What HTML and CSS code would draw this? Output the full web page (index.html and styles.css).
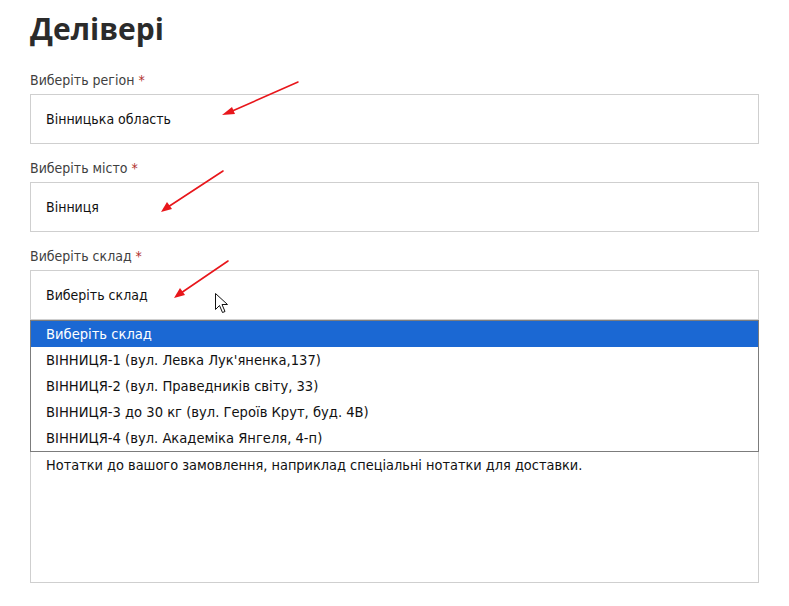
FILE: index.html
```html
<!DOCTYPE html>
<html lang="uk">
<head>
<meta charset="utf-8">
<title>Делівері</title>
<link rel="stylesheet" href="styles.css">
</head>
<body>
<div class="page">
  <h1 class="title">Делівері</h1>

  <div class="field">
    <label class="label">Виберіть регіон <span class="req">*</span></label>
    <div class="select">Вінницька область</div>
  </div>

  <div class="field">
    <label class="label">Виберіть місто <span class="req">*</span></label>
    <div class="select">Вінниця</div>
  </div>

  <div class="field field-open">
    <label class="label">Виберіть склад <span class="req">*</span></label>
    <div class="select">Виберіть склад</div>
    <ul class="dropdown">
      <li class="option selected">Виберіть склад</li>
      <li class="option">ВІННИЦЯ-1 (вул. Левка Лук'яненка,137)</li>
      <li class="option">ВІННИЦЯ-2 (вул. Праведників світу, 33)</li>
      <li class="option">ВІННИЦЯ-3 до 30 кг (вул. Героїв Крут, буд. 4В)</li>
      <li class="option">ВІННИЦЯ-4 (вул. Академіка Янгеля, 4-п)</li>
    </ul>
  </div>

  <div class="notes">
    <h3 class="notes-title">Додаткова інформація</h3>
    <label class="label">Примітки до замовлення (необов'язково)</label>
    <div class="textarea">Нотатки до вашого замовлення, наприклад спеціальні нотатки для доставки.</div>
  </div>

  <svg class="annotations" width="789" height="606" viewBox="0 0 789 606" xmlns="http://www.w3.org/2000/svg">
    <g stroke="#e8161b" stroke-width="1.6" fill="none" stroke-linecap="round">
      <line x1="298" y1="82" x2="230" y2="112"/>
      <line x1="223" y1="171" x2="168" y2="207"/>
      <line x1="228" y1="261" x2="181" y2="293"/>
    </g>
    <g fill="#e8161b">
      <polygon points="222,115 232,107 235,114"/>
      <polygon points="161,212 167,202 172,209"/>
      <polygon points="174,298 180,288 185,295"/>
    </g>
    <path d="M215.5 293.5 L215.5 309.5 L219.5 305.5 L222.5 312.5 L225 311.5 L222 304.5 L227.5 304.5 Z" fill="#fff" stroke="#111" stroke-width="1" stroke-linejoin="round"/>
  </svg>
</div>
</body>
</html>
```

FILE: styles.css
```css
html, body {
  margin: 0;
  padding: 0;
  background: #ffffff;
}

.page {
  position: relative;
  width: 789px;
  height: 606px;
  box-sizing: border-box;
  padding: 11px 30px 0 30px;
  overflow: hidden;
  font-family: "DejaVu Sans Condensed", "DejaVu Sans", sans-serif;
  font-stretch: condensed;
  color: #111;
}

.title {
  margin: 0 0 23px 0;
  font-family: "Open Sans", "DejaVu Sans", sans-serif;
  font-stretch: normal;
  font-weight: 700;
  font-size: 30px;
  line-height: 36px;
  color: #2b2b2b;
}

.field {
  margin-bottom: 14px;
}

.field-open {
  position: relative;
}

.label {
  display: block;
  font-size: 14px;
  line-height: 20px;
  color: #3f3f3f;
  margin-bottom: 4px;
}

.req {
  color: #b0302b;
}

.select {
  box-sizing: border-box;
  height: 50px;
  border: 1px solid #cfcfcf;
  padding: 0 15px;
  display: flex;
  align-items: center;
  font-size: 14px;
  color: #111;
  background: #fff;
}

.dropdown {
  position: absolute;
  left: 0;
  right: 0;
  top: 100%;
  margin: 0;
  padding: 0;
  list-style: none;
  border: 1px solid #7c7c7c;
  background: #fff;
  z-index: 2;
}

.option {
  height: 26px;
  line-height: 26px;
  padding: 0 15px;
  font-size: 14.6px;
  color: #111;
  white-space: nowrap;
}

.option.selected {
  background: #1b68d3;
  color: #fff;
}

.notes {
  margin-top: 63px;
}

.notes-title {
  margin: 0 0 10px 0;
  font-size: 18px;
  line-height: 26px;
  color: #2b2b2b;
}

.textarea {
  box-sizing: border-box;
  height: 140px;
  border: 1px solid #cfcfcf;
  padding: 11px 15px;
  font-size: 14.4px;
  line-height: 20px;
  color: #111;
}

.annotations {
  position: absolute;
  left: 0;
  top: 0;
  z-index: 5;
  pointer-events: none;
}
```
